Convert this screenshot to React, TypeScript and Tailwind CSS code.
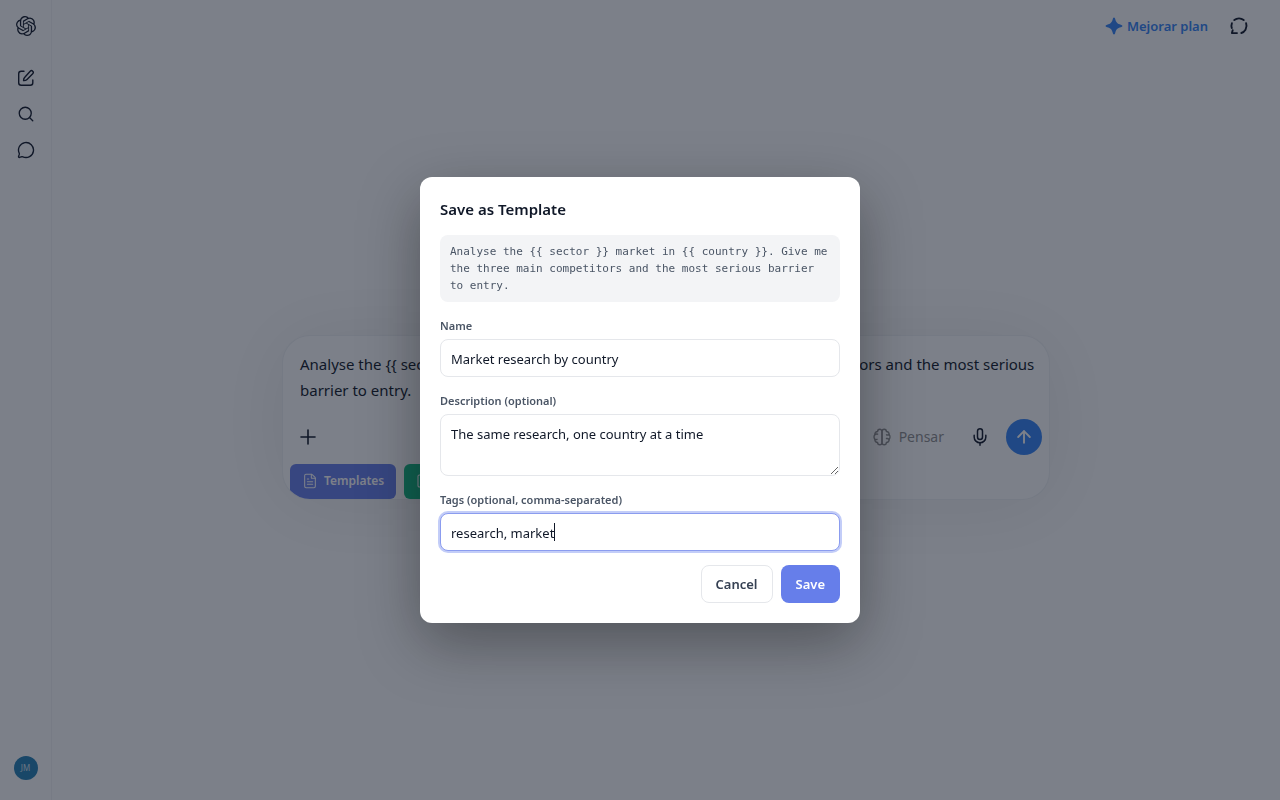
import { useState } from "react";
import { SiOpenai } from "react-icons/si";
import { ArrowUp, FileText, MessageCircle, Mic, Plus, Save, Search } from "lucide-react";

const prompt =
  "Analyse the {{ sector }} market in {{ country }}. Give me the three main competitors and the most serious barrier to entry.";

const fieldClass =
  "block w-full rounded-lg border border-gray-200 bg-white px-2.5 text-[13px] text-gray-900 outline-none focus:border-[#8b9cef] focus:ring-2 focus:ring-[#c3cdf8]";

const labelClass = "mb-1 block pt-px text-[11px] leading-[18px] font-semibold text-gray-600";

const PenIcon = () => (
  <svg width="18" height="18" viewBox="0 0 18 18" fill="none" stroke="currentColor" strokeWidth="1.4" strokeLinecap="round" strokeLinejoin="round">
    <path d="M7 2.2H4.2a2.5 2.5 0 0 0-2.500 2.500v9.100a2.500 2.500 0 0 0 2.500 2.500h9.100a2.500 2.500 0 0 0 2.500-2.500V11" />
    <path d="M13.200 2.200a1.750 1.750 0 0 1 2.500 2.500L10 10.400c-.8.8-2 1.300-3.400 1.200-.1-1.400.4-2.600 1.200-3.400Z" />
  </svg>
);

const SparkIcon = () => (
  <svg width="18" height="18" viewBox="0 0 18 18" fill="currentColor">
    <path d="M9 .6c.8 0 1 .8 1.200 1.500.9 3.500 2.200 4.800 5.700 5.700.7.200 1.500.4 1.500 1.200s-.8 1-1.500 1.200c-3.500.9-4.800 2.200-5.700 5.700-.2.700-.4 1.500-1.200 1.500s-1-.8-1.200-1.500c-.9-3.500-2.200-4.800-5.700-5.700C1.400 10 .6 9.800.6 9s.8-1 1.500-1.200c3.500-.9 4.800-2.200 5.700-5.700C8 1.400 8.200.6 9 .6Z" />
  </svg>
);

const TemporaryChatIcon = () => (
  <svg width="20" height="20" viewBox="0 0 20 20" fill="none" stroke="currentColor" strokeWidth="1.9" strokeLinecap="round" strokeLinejoin="round">
    <path d="M5.300 4.100a7.500 7.500 0 0 1 9.400 0" />
    <path d="M17.100 7.200a7.500 7.500 0 0 1-.6 6.500 7.500 7.500 0 0 1-4.200 3.300" />
    <path d="M2.900 7.200a7.500 7.500 0 0 0-.1 4.800" />
    <path d="M3.700 14.200 2.900 17l5.100.1" />
  </svg>
);

const BrainIcon = () => (
  <svg width="18" height="18" viewBox="0 0 18 18" fill="none" stroke="currentColor" strokeWidth="1.4" strokeLinecap="round" strokeLinejoin="round">
    <path d="M9 3.500a2.200 2.200 0 0 0-4.400 0c-1.800 0-3 1.500-2.600 3.100-1.300 1.300-1.300 3.500 0 4.800-.4 1.600.8 3.100 2.600 3.100a2.200 2.200 0 0 0 4.400 0Z" />
    <path d="M9 3.500a2.200 2.200 0 0 1 4.400 0c1.800 0 3 1.500 2.600 3.100 1.300 1.300 1.300 3.500 0 4.800.4 1.600-.8 3.100-2.600 3.100a2.200 2.200 0 0 1-4.400 0Z" />
    <path d="M2 6.600c.8-.7 1.700-.8 2.600-.4M2 11.400c.6.300 1.400.3 2-.1M16 6.600c-.8.500-1.700.6-2.500.2M16 11.400c-.7-.8-1.500-1.100-2.500-.9" />
  </svg>
);

const Sidebar = () => (
  <aside className="flex w-[52px] shrink-0 flex-col items-center border-r border-gray-100 pt-4 pb-5">
    <a href="#home" aria-label="Home">
      <SiOpenai size={20} />
    </a>
    <nav className="mt-8 flex flex-col gap-[18px]">
      <button type="button" aria-label="New chat" className="mt-px">
        <PenIcon />
      </button>
      <button type="button" aria-label="Search">
        <Search size={18} strokeWidth={1.8} />
      </button>
      <button type="button" aria-label="Chats">
        <MessageCircle size={18} strokeWidth={1.8} />
      </button>
    </nav>
    <button type="button" aria-label="Account" className="mt-auto size-6 rounded-full bg-[#2580b5] text-[8px] text-white/80">
      JM
    </button>
  </aside>
);

const Header = () => (
  <header className="flex h-[52px] items-center justify-end gap-[21px] pr-[31px]">
    <button type="button" className="flex items-center gap-1 text-[13px] font-semibold text-[#3484f5]">
      <SparkIcon />
      <span className="pt-0.5">Mejorar plan</span>
    </button>
    <button type="button" aria-label="Temporary chat">
      <TemporaryChatIcon />
    </button>
  </header>
);

const Composer = () => (
  <div className="w-full max-w-[768px] overflow-hidden rounded-[28px] border border-gray-200/60 bg-white shadow-[0_4px_80px_rgba(0,0,0,0.08)]">
    <p className="pt-[15px] pr-2 pl-[17px] text-[15px] leading-[26px]">{prompt}</p>
    <div className="mt-4 flex h-9 items-center px-[7px]">
      <button type="button" aria-label="Add" className="flex size-9 items-center justify-center">
        <Plus size={24} strokeWidth={1.6} />
      </button>
      <button type="button" className="ml-auto flex items-center gap-2 text-[14px] text-[#8f8f8f]">
        <BrainIcon />
        Pensar
      </button>
      <button type="button" aria-label="Dictate" className="ml-[18px] flex size-9 items-center justify-center">
        <Mic size={20} strokeWidth={1.8} />
      </button>
      <button type="button" aria-label="Send" className="ml-2 flex size-9 items-center justify-center rounded-full bg-[#3484f5] text-white">
        <ArrowUp size={20} strokeWidth={2.3} />
      </button>
    </div>
    <div className="mt-[9px] flex gap-2 px-[7px]">
      <button type="button" className="flex h-[35px] items-center gap-1.5 rounded-md bg-[#667eea] px-3 text-[12px] font-semibold text-white">
        <FileText size={16} strokeWidth={1.6} />
        Templates
      </button>
      <button type="button" className="flex h-[35px] items-center gap-1.5 rounded-md bg-[#10b981] px-3 text-[12px] font-semibold text-white">
        <Save size={16} strokeWidth={1.6} />
        Save
      </button>
    </div>
  </div>
);

const SaveTemplateDialog = () => {
  const [name, setName] = useState("Market research by country");
  const [description, setDescription] = useState("The same research, one country at a time");
  const [tags, setTags] = useState("research, market");

  return (
    <div className="fixed inset-0 flex items-center justify-center bg-gray-900/55 p-4">
      <form
        role="dialog"
        aria-modal="true"
        aria-labelledby="dialog-title"
        onSubmit={(e) => e.preventDefault()}
        className="flex w-full max-w-[440px] flex-col gap-3.5 rounded-xl bg-white p-5 shadow-[0_20px_60px_rgba(0,0,0,0.35)]"
      >
        <h2 id="dialog-title" className="text-[15px] leading-6 font-semibold text-gray-900">
          Save as Template
        </h2>
        <p className="rounded-lg bg-gray-100 px-2.5 py-2 font-['DejaVu_Sans_Mono',monospace] text-[11px] leading-[17px] text-gray-600">
          {prompt}
        </p>
        <div>
          <label htmlFor="name" className={labelClass}>Name</label>
          <input id="name" value={name} onChange={(e) => setName(e.target.value)} className={`${fieldClass} h-[38px] pt-0.5`} />
        </div>
        <div>
          <label htmlFor="description" className={labelClass}>Description (optional)</label>
          <textarea
            id="description"
            value={description}
            onChange={(e) => setDescription(e.target.value)}
            className={`${fieldClass} h-[62px] resize-y py-[9px] leading-5`}
          />
        </div>
        <div>
          <label htmlFor="tags" className={labelClass}>Tags (optional, comma-separated)</label>
          <div className="relative">
            <input
              id="tags"
              autoFocus
              value={tags}
              onChange={(e) => setTags(e.target.value)}
              className={`${fieldClass} h-[38px] pt-0.5 caret-transparent`}
            />
            <span aria-hidden="true" className="absolute top-2.5 left-[114px] h-[18px] w-px bg-gray-900" />
          </div>
        </div>
        <div className="flex justify-end gap-2">
          <button type="button" className="h-[38px] rounded-lg border border-gray-200 bg-white px-3.5 pt-0.5 text-[13px] font-semibold text-gray-700">
            Cancel
          </button>
          <button type="submit" className="h-[38px] rounded-lg bg-[#667eea] px-[15px] pt-0.5 text-[13px] font-semibold text-white">
            Save
          </button>
        </div>
      </form>
    </div>
  );
};

const App = () => {
  return (
    <div className="flex min-h-screen bg-white font-['Noto_Sans',sans-serif] text-gray-900">
      <Sidebar />
      <div className="flex min-w-0 flex-1 flex-col">
        <Header />
        <main className="flex flex-1 items-center justify-center pb-[18px]">
          <Composer />
        </main>
      </div>
      <SaveTemplateDialog />
    </div>
  );
};

export default App;
